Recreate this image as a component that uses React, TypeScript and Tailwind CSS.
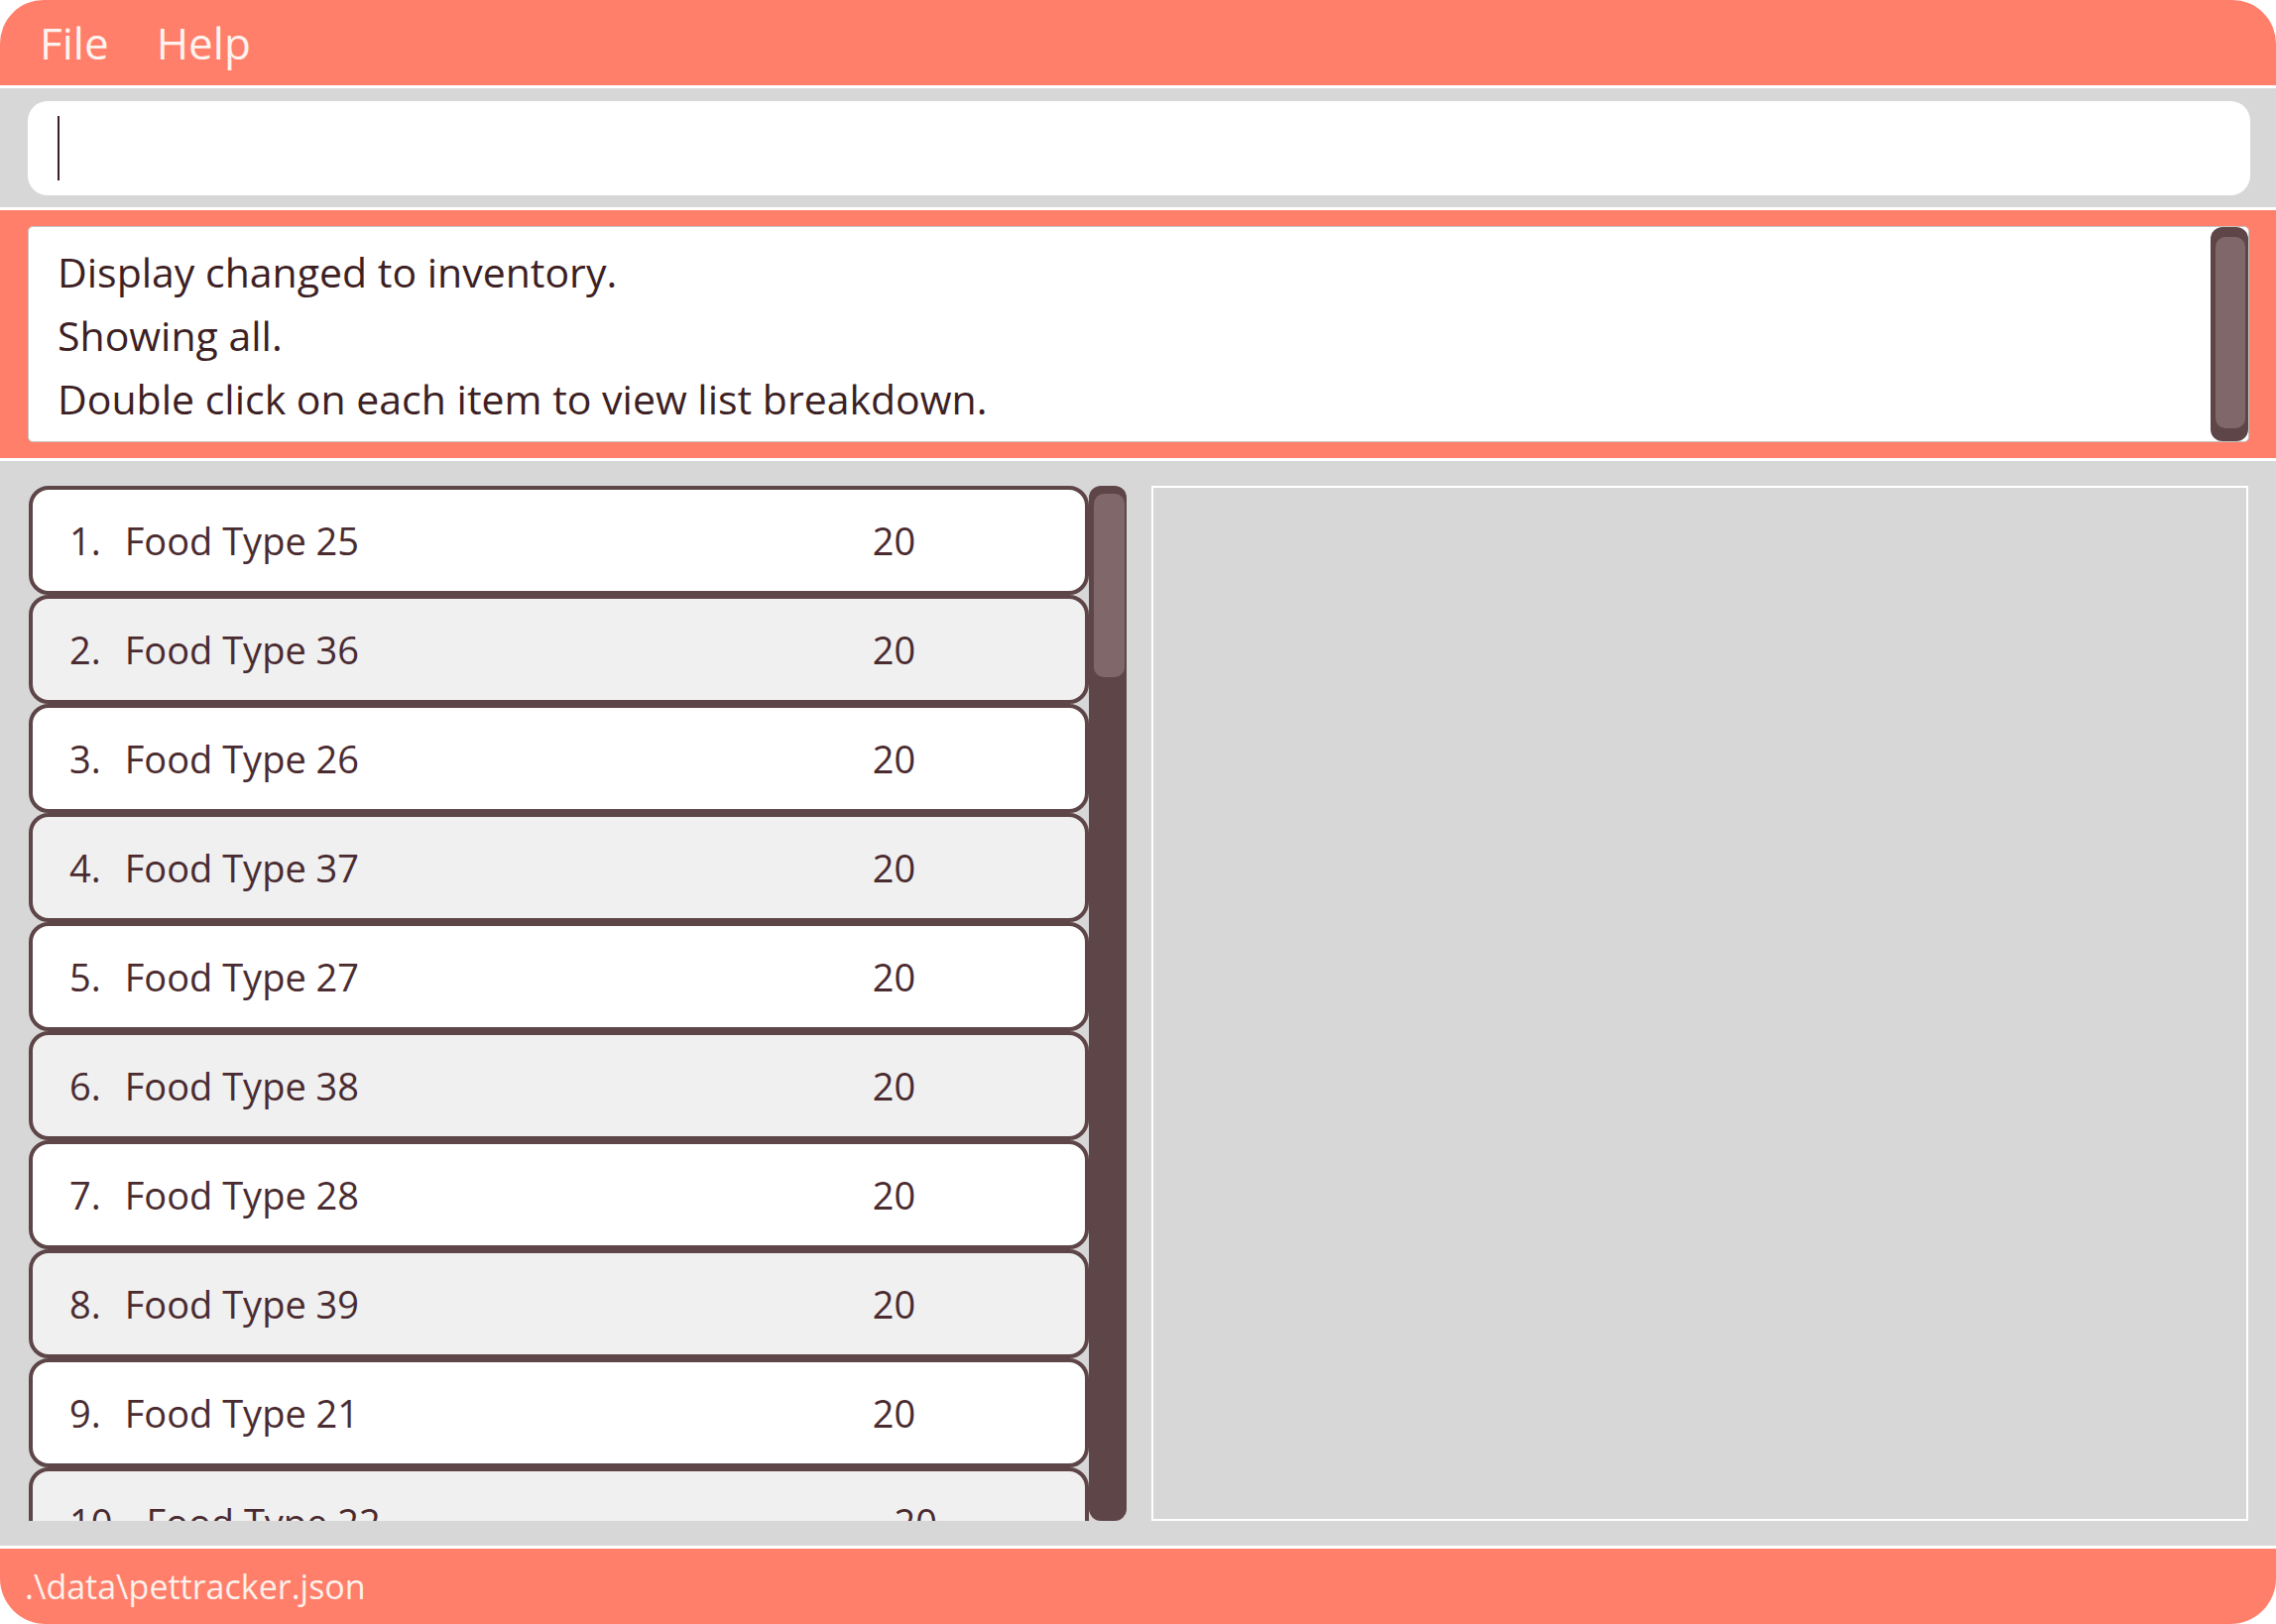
const foods = [
  { name: "Food Type 25", qty: 20 },
  { name: "Food Type 36", qty: 20 },
  { name: "Food Type 26", qty: 20 },
  { name: "Food Type 37", qty: 20 },
  { name: "Food Type 27", qty: 20 },
  { name: "Food Type 38", qty: 20 },
  { name: "Food Type 28", qty: 20 },
  { name: "Food Type 39", qty: 20 },
  { name: "Food Type 21", qty: 20 },
  { name: "Food Type 22", qty: 20 },
  { name: "Food Type 23", qty: 20 },
];

const messages = [
  "Display changed to inventory.",
  "Showing all.",
  "Double click on each item to view list breakdown.",
];

const FoodCell = ({
  index,
  name,
  qty,
}: {
  index: number;
  name: string;
  qty: number;
}) => (
  <div
    className={`flex h-[110px] shrink-0 items-center rounded-[20px] border-4 border-[#5e4648] pl-[37px] text-[38px] text-[#4a2b30] ${
      index % 2 === 0 ? "bg-white" : "bg-[#f0f0f0]"
    }`}
  >
    <span className="mr-[24px]">{index + 1}.</span>
    <span className="w-[754px]">{name}</span>
    <span>{qty}</span>
  </div>
);

export default function App() {
  return (
    <div className="flex h-[1638px] w-[2295px] flex-col gap-[3px] overflow-hidden bg-white font-['Open_Sans','Noto_Sans',sans-serif]">
      {/* menu bar */}
      <div className="flex h-[86px] shrink-0 items-center gap-[48px] rounded-t-[44px] bg-[#ff7f6a] pl-[40px] text-[44px] leading-none text-[#fff3ef]">
        <span>File</span>
        <span>Help</span>
      </div>

      {/* command box */}
      <div className="flex h-[120px] shrink-0 items-center bg-[#d7d7d7] pl-[28px] pr-[26px]">
        <div className="flex h-[95px] flex-1 items-center rounded-[20px] bg-white pl-[30px]">
          <div className="h-[65px] w-[2px] bg-[#3d1f24]" />
        </div>
      </div>

      {/* result display */}
      <div className="flex h-[250px] shrink-0 bg-[#ff7f6a] pb-[16px] pl-[28px] pr-[27px] pt-[16px]">
        <div className="flex flex-1 rounded-[5px] border border-[#c4c4c4] bg-white">
          <div className="flex-1 pl-[29px] pt-[13px] text-[41px] leading-[64px] text-[#3d1f24]">
            {messages.map((m) => (
              <div key={m}>{m}</div>
            ))}
          </div>
          <div className="flex w-[38px] rounded-[12px] bg-[#5e4648] pb-[13px] pl-[5px] pr-[3px] pt-[10px]">
            <div className="flex-1 rounded-[10px] bg-[#806769]" />
          </div>
        </div>
      </div>

      {/* main area */}
      <div className="grid min-h-0 flex-1 grid-cols-2 gap-[25px] bg-[#d7d7d7] pb-[25px] pl-[29px] pr-[28px] pt-[25px]">
        <div className="flex min-h-0">
          <div className="flex min-h-0 flex-1 flex-col overflow-hidden">
            {foods.map((f, i) => (
              <FoodCell key={f.name} index={i} name={f.name} qty={f.qty} />
            ))}
          </div>
          <div className="flex w-[38px] shrink-0 flex-col rounded-[12px] bg-[#5e4648] pl-[5px] pr-[2px] pt-[8px]">
            <div className="h-[185px] rounded-[10px] bg-[#806769]" />
          </div>
        </div>
        <div className="border-2 border-white bg-[#d7d7d7]" />
      </div>

      {/* status bar */}
      <div className="flex h-[76px] shrink-0 items-center rounded-b-[46px] bg-[#ff7f6a] pl-[25px] text-[34px] leading-none text-[#fff0eb]">
        .\data\pettracker.json
      </div>
    </div>
  );
}
